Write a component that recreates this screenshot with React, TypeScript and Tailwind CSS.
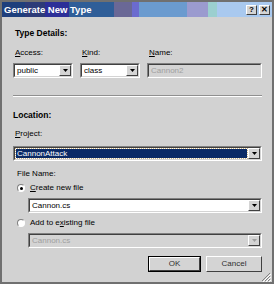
import React from 'react';

const Arrow = ({ disabled }: { disabled?: boolean }) => (
  <div className="w-[12px] h-full flex items-center justify-center bg-[#d4d4d4] border border-white border-r-[#404040] border-b-[#404040]">
    <svg width="5" height="3" viewBox="0 0 5 3">
      <polygon points="0,0 5,0 2.5,3" fill={disabled ? '#a0a0a0' : '#000'} />
    </svg>
  </div>
);

const Field = ({
  value,
  className,
  combo,
  disabled,
  selected,
}: {
  value: string;
  className?: string;
  combo?: boolean;
  disabled?: boolean;
  selected?: boolean;
}) => (
  <div className={`h-[15px] border border-[#808080] border-r-white border-b-white ${className ?? ''}`}>
    <div
      className={`h-full flex border border-[#404040] border-r-[#d4d4d4] border-b-[#d4d4d4] ${
        disabled ? 'bg-[#d4d4d4]' : 'bg-white'
      }`}
    >
      <div className="flex-1 flex items-center min-w-0 p-[1px]">
        <span
          className={`h-full flex items-center px-[1px] leading-none ${
            selected ? 'flex-1 bg-[#0a2a66] text-white outline outline-1 outline-dotted outline-[#c8b080]' : ''
          } ${disabled ? 'text-[#a0a0a0]' : ''}`}
        >
          {value}
        </span>
      </div>
      {combo && <Arrow disabled={disabled} />}
    </div>
  </div>
);

const Radio = ({ checked }: { checked?: boolean }) => (
  <div className="w-[8px] h-[8px] rounded-full border border-[#808080] border-r-white border-b-white bg-white flex items-center justify-center">
    {checked && <div className="w-[3px] h-[3px] rounded-full bg-black" />}
  </div>
);

const Button = ({ label, primary }: { label: string; primary?: boolean }) => (
  <div className={`h-[16px] ${primary ? 'w-[53px] border border-black' : 'w-[56px]'}`}>
    <div className="h-full flex items-center justify-center bg-[#d4d4d4] border border-white border-r-[#404040] border-b-[#404040] text-[#303030]">
      {label}
    </div>
  </div>
);

const titleBg =
  'bg-[linear-gradient(to_right,#1e3f7c_0px,#1e3f7c_23px,#2d3b78_23px,#2d3b78_43px,#2c2f98_43px,#2c2f98_67px,#2f5e98_67px,#2f5e98_112px,#6a6896_112px,#6a6896_130px,#6b6bcf_130px,#6b6bcf_137px,#6b9bcf_137px,#6b9bcf_185px,#9b9bcf_185px,#9b9bcf_206px,#9bcfcf_206px,#9bcfcf_215px,#a9c9ef_215px,#a9c9ef_100%)]';

export default function App() {
  return (
    <div className="w-[274px] h-[284px] bg-[#d2d2d2] border-2 border-[#707070] font-['Liberation_Sans',Arial,sans-serif] text-[8px] text-black flex flex-col">
      {/* title bar */}
      <div className={`h-[15px] flex items-center pl-[2px] pr-[2px] ${titleBg}`}>
        <span className="text-white font-bold text-[9.5px] leading-none flex-1">Generate New Type</span>
        <div className="flex gap-[2px]">
          <div className="w-[11px] h-[10px] bg-[#d4d4d4] border border-white border-r-[#404040] border-b-[#404040] flex items-center justify-center font-bold text-[8px] leading-none">?</div>
          <div className="w-[11px] h-[10px] bg-[#d4d4d4] border border-white border-r-[#404040] border-b-[#404040] flex items-center justify-center font-bold text-[8px] leading-none">✕</div>
        </div>
      </div>

      <div className="flex-1 flex flex-col pl-[11px] pr-[10px]">
        <div className="mt-[11px] h-[10px] flex items-center pl-[2px] font-bold text-[8.5px]">Type Details:</div>

        <div className="mt-[10px] flex gap-[7px]">
          <div className="w-[60px] flex flex-col">
            <div className="h-[10px] flex items-center pl-[2px]"><span><span className="underline">A</span>ccess:</span></div>
            <Field className="mt-[5px]" value="public" combo />
          </div>
          <div className="w-[60px] flex flex-col">
            <div className="h-[10px] flex items-center pl-[2px]"><span><span className="underline">K</span>ind:</span></div>
            <Field className="mt-[5px]" value="class" combo />
          </div>
          <div className="flex-1 flex flex-col">
            <div className="h-[10px] flex items-center pl-[2px]"><span><span className="underline">N</span>ame:</span></div>
            <Field className="mt-[5px]" value="Cannon2" disabled />
          </div>
        </div>

        <div className="mt-[17px] h-[2px] border-t border-[#909090] border-b border-b-white" />

        <div className="mt-[13px] h-[10px] flex items-center font-bold text-[8.5px]">Location:</div>
        <div className="mt-[9px] h-[10px] flex items-center pl-[2px]"><span><span className="underline">P</span>roject:</span></div>
        <Field className="mt-[7px]" value="CannonAttack" combo selected />

        <div className="mt-[8px] h-[10px] flex items-center pl-[4px]">File Name:</div>
        <div className="mt-[4px] h-[10px] flex items-center gap-[5px] pl-[4px]">
          <Radio checked />
          <span><span className="underline">C</span>reate new file</span>
        </div>
        <Field className="mt-[5px] ml-[15px]" value="Cannon.cs" combo />
        <div className="mt-[5px] h-[10px] flex items-center gap-[5px] pl-[4px]">
          <Radio />
          <span>Add to e<span className="underline">x</span>isting file</span>
        </div>
        <Field className="mt-[5px] ml-[15px]" value="Cannon.cs" combo disabled />

        <div className="mt-[8px] flex justify-end gap-[5px]">
          <Button label="OK" primary />
          <Button label="Cancel" />
        </div>
      </div>

      {/* size grip */}
      <div className="h-[10px] flex justify-end pr-[1px]">
        <svg width="10" height="10" viewBox="0 0 10 10">
          <path d="M9 1 L1 9 M9 4 L4 9 M9 7 L7 9" stroke="#808080" strokeWidth="1" />
          <path d="M10 2 L2 10 M10 5 L5 10 M10 8 L8 10" stroke="#ffffff" strokeWidth="1" />
        </svg>
      </div>
    </div>
  );
}
